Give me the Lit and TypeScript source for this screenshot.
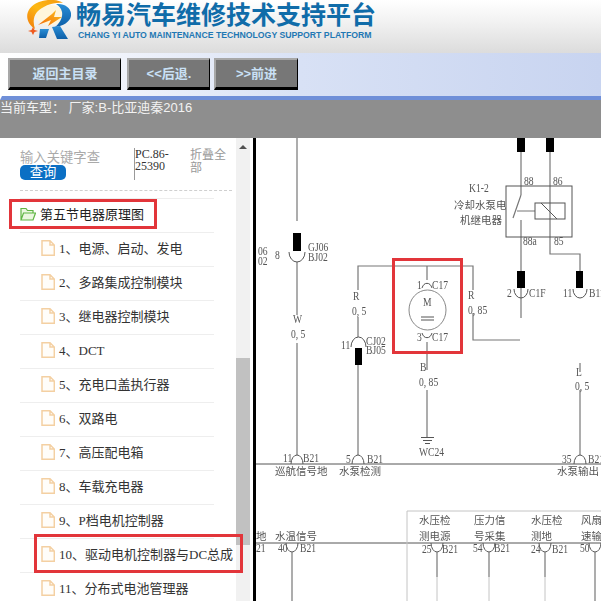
import { LitElement, html, css, svg } from "lit";
import { customElement } from "lit/decorators.js";

const items = [
  "1、电源、启动、发电", "2、多路集成控制模块", "3、继电器控制模块", "4、DCT", "5、充电口盖执行器",
  "6、双路电", "7、高压配电箱", "8、车载充电器", "9、P档电机控制器", "10、驱动电机控制器与DC总成", "11、分布式电池管理器",
];

// Latin / numeric labels: x, baseline y, text
const latin: [number, number, string][] = [
  [258, 255, "06"], [258, 265, "02"], [275, 259, "8"], [308, 251, "GJ06"], [308, 261, "BJ02"],
  [293, 323, "W"], [291, 338, "0, 5"], [353, 300, "R"], [352, 315, "0, 5"], [341, 349, "11"], [366, 345, "CJ02"], [366, 354, "BJ05"],
  [417, 289, "1"], [432, 289, "C17"], [423, 306, "M"], [417, 341, "3"], [432, 341, "C17"], [468, 299, "R"], [468, 314, "0, 85"],
  [420, 371, "B"], [419, 386, "0, 85"], [419, 456, "WC24"], [469, 192, "K1-2"],
  [524, 185, "88"], [553, 185, "86"], [523, 245, "88a"], [554, 245, "85"],
  [507, 297, "2"], [529, 297, "C1F"], [563, 297, "11"], [589, 297, "B11"], [576, 376, "L"], [575, 390, "0, 5"],
  [283, 462, "11"], [303, 462, "B21"], [346, 463, "5"], [367, 463, "B21"], [562, 463, "35"], [588, 463, "B21"],
  [278, 552, "40"], [300, 552, "B21"], [422, 553, "25"], [442, 553, "B21"], [473, 552, "54"], [494, 552, "B21"],
  [531, 553, "24"], [552, 553, "B21"], [580, 552, "50"], [256, 552, "21"],
];

const cjk: [number, number, string][] = [
  [454, 209, "冷却水泵电"], [460, 224, "机继电器"],
  [275, 475, "巡航信号地"], [339, 475, "水泵检测"], [557, 475, "水泵输出"],
  [275, 540, "水温信号"], [419, 524, "水压检"], [419, 540, "测电源"], [474, 524, "压力信"], [474, 540, "号采集"],
  [531, 524, "水压检"], [531, 540, "测地"], [581, 524, "风扇"], [581, 540, "速输"], [256, 540, "地"],
];

const caps: [number, number][] = [[297, 455], [358, 455], [580, 455]];
const cups: number[] = [292, 437, 489, 545, 595];

@customElement("schematic-view")
class SchematicView extends LitElement {
  static styles = css`
    :host { display: block; width: 100%; height: 100%; background: #fff; }
    svg { display: block; width: 345px; height: 463px; filter: blur(0.35px); }
    .w { fill: none; stroke: #777; stroke-width: 1.2; }
    .dk { fill: none; stroke: #555; stroke-width: 1; }
    .faint { fill: none; stroke: #c4c4c4; stroke-width: 1; }
    .blk { fill: #000; }
    text { font-family: "Liberation Serif", serif; font-size: 12px; fill: #555; }
    text.c { font-family: "Noto Sans CJK SC", sans-serif; font-size: 10.5px; }
  `;
  render() {
    return html`<svg viewBox="256 138 345 463" xmlns="http://www.w3.org/2000/svg">
      ${svg`
      <path class="w" d="M297 138V221M297 262V315M297 343V455M358 348V455M358 317V337M358 290V266H473V290M473 313V340H520"/>
      <path class="w" d="M427 266V280M427 342V370M427 390V437"/>
      <path class="w" d="M521 138V195M521 220V318M550 138V254H580V271M580 363V372M580 390V455"/>
      <path class="w" d="M521 195L513 218M517 211H535"/>
      <rect class="dk" x="506" y="186" width="66" height="51"/>
      <rect class="dk" x="535" y="203" width="30" height="16"/>
      <path class="dk" d="M541 203L557 219"/>
      <path class="dk" d="M421 437.500H434M423 440.500H432M425 443.500H430"/>
      <ellipse cx="427.500" cy="310" rx="18.500" ry="20" fill="#fff" stroke="#888"/>
      <path class="dk" d="M421 317H434M421 320H434"/>
      <path class="dk" d="M422 288A5.500 8 0 0 1 432 288M422 333A5.500 8 0 0 0 432 333"/>
      <path class="dk" d="M289 252A8 10 0 0 0 305 252M351 347A7.500 10 0 0 1 366 347M514 289A7 9 0 0 0 528 289M573 289A7 9 0 0 0 587 289"/>
      ${caps.map(([x, y]) => svg`<path class="dk" d="M${x - 6} ${y + 9}A6 9 0 0 1 ${x + 6} ${y + 9}"/>`)}
      ${cups.map((x) => svg`<path class="dk" d="M${x - 6} 543A6 9 0 0 0 ${x + 6} 543"/>`)}
      <rect class="blk" x="293" y="233" width="8" height="18"/>
      <rect class="blk" x="355" y="348" width="7" height="17"/>
      <rect class="blk" x="517" y="138" width="8" height="14"/>
      <rect class="blk" x="546" y="138" width="8" height="14"/>
      <rect class="blk" x="517" y="271" width="8" height="17"/>
      <rect class="blk" x="576" y="271" width="7" height="17"/>
      <path class="dk" d="M256 464H601M256 543H601"/>
      <path class="faint" d="M407 601V511H601"/>
      <path class="w" d="M292 552V601M437 552V577M489 552V577M545 552V577M595 552V601"/>
      <path class="faint" d="M437 577V601M489 577V601M545 577V601"/>
      ${latin.map(([x, y, t]) => svg`<text transform="translate(${x} ${y}) scale(.8 1)">${t}</text>`)}
      ${cjk.map(([x, y, t]) => svg`<text class="c" x=${x} y=${y}>${t}</text>`)}
      `}
    </svg>`;
  }
}

@customElement("app-root")
export class AppRoot extends LitElement {
  static styles = css`
    :host { display: block; width: 601px; height: 601px; position: relative; overflow: hidden; background: #fff;
      font-family: "Liberation Sans", "Noto Sans CJK SC", sans-serif; }
    .page { display: flex; flex-direction: column; height: 601px; }
    .header { height: 53px; flex: none; background: linear-gradient(#ffffff, #f2f2f2 40%, #dcdcdc); display: flex; gap: 5px; padding-left: 25px; box-sizing: border-box; }
    .logo { width: 46px; height: 41px; flex: none; }
    .brand { display: flex; flex-direction: column; align-items: flex-start; margin-top: -1px; }
    .title { font-size: 25px; line-height: 29px; font-weight: 700; color: #106ca9; white-space: nowrap; font-family: "Noto Sans CJK SC", sans-serif; }
    .sub { font-size: 8.7px; line-height: 11px; font-weight: 700; color: #1f78b4; margin: 2px 0 0 2px; white-space: nowrap; }
    .nav { height: 47px; flex: none; box-sizing: border-box; padding: 5px 0 0 6px; display: flex; gap: 5px; background: linear-gradient(90deg, #ffffff, #f0f3fb 20%, #d8e1f5 50%, #c8d4f0); border-bottom: 4px solid #6f8fd8; border-left: 2px solid #fff; align-items: flex-start; }
    .btn { box-sizing: border-box; height: 32px; padding-bottom: 3px; background: #777; color: #c9e0f5; font-size: 13px; font-weight: 700; display: flex; align-items: center; justify-content: center;
      border-top: 2px solid #a8a8a8; border-left: 2px solid #a8a8a8; border-bottom: 3px solid #000; border-right: 1px solid #000; }
    .b1 { width: 113px; margin-right: 1px; } .b2 { width: 83px; } .b3 { width: 84px; margin-left: -1px; }
    .strip { height: 38px; flex: none; background: #8e8e8e; color: #f2f2f2; font-size: 13px; line-height: 15px; white-space: pre; }
    .main { flex: 1; min-height: 0; display: flex; overflow: hidden; }
    .side { width: 236px; flex: none; overflow: hidden; box-sizing: border-box; padding-left: 20px; }
    .search { display: flex; height: 53px; box-sizing: border-box; padding-top: 10px; border-bottom: 1px dashed #cfcfcf; width: 212px; }
    .q { width: 114px; flex: none; padding-top: 2px; }
    .ph { color: #aaa; font-size: 13.33px; line-height: 15px; white-space: nowrap; }
    .go { display: block; width: 46px; height: 15px; border-radius: 5px; background: #0b6fc4; color: #fff; font-size: 13.33px; line-height: 15px; text-align: center; border: 0; padding: 0; font-family: inherit; }
    .pc { width: 56px; flex: none; box-sizing: border-box; height: 32px; border-left: 1px solid #999; font: 12px/12px "Liberation Serif", serif; color: #333; white-space: pre; }
    .fold { width: 38px; font-size: 12px; line-height: 12.500px; color: #999; padding-top: 1px; }
    ul { list-style: none; margin: 7px 0 0; padding: 0; width: 194px; }
    li { height: 34px; box-sizing: border-box; border-top: 1px solid #eee; padding-bottom: 4px; display: flex; align-items: center; white-space: nowrap; font: 13px "Liberation Serif", "Noto Sans CJK SC", serif; color: #333; padding-left: 21px; gap: 4px; }
    li.root { padding-left: 0; color: #222; gap: 4px; }
    li svg { flex: none; }
    .scroll { width: 14px; flex: none; background: #f1f1f1; position: relative; }
    .arrow { position: absolute; left: 3px; top: 7px; width: 0; height: 0; border: 4px solid transparent; border-top: 0; border-bottom: 4px solid #505050; }
    .thumb { position: absolute; left: 0; right: 0; top: 220px; height: 187px; background: #c1c1c1; }
    .view { flex: 1; min-width: 0; margin-left: 3px; border-left: 3px solid #000; }
    .mark { position: absolute; box-sizing: border-box; border: 3px solid #e2353a; pointer-events: none; }
    .m1 { left: 9px; top: 199px; width: 148px; height: 30px; }
    .m2 { left: 34px; top: 534px; width: 209px; height: 39px; }
    .m3 { left: 392px; top: 258px; width: 71px; height: 96px; }
  `;

  private file() {
    return html`<svg width="14" height="16" viewBox="0 0 14 16"><path d="M1 .8H9L13.300 5V15.300H1Z M9 .8V5H13.300" fill="#fffdf9" stroke="#f4d0a2" stroke-width="1.500"/></svg>`;
  }
  private folder() {
    return html`<svg width="16" height="14" viewBox="0 0 16 14"><path d="M1 13V1.500H6L7.500 3.500H13V6M1 13L3.500 6H15.500L13 13Z" fill="#eaf7e0" stroke="#5fb544" stroke-width="1.200"/></svg>`;
  }

  render() {
    return html`<div class="page">
      <div class="header">
        <svg class="logo" viewBox="0 0 46 41">
          <defs>
            <linearGradient id="o" x1="0" y1="1" x2="1" y2="0"><stop offset="0" stop-color="#f07a0c"/><stop offset=".5" stop-color="#fdb813"/><stop offset="1" stop-color="#f59a10"/></linearGradient>
            <linearGradient id="y" x1="0" y1="1" x2="1" y2="0"><stop offset="0" stop-color="#f26a0c"/><stop offset="1" stop-color="#fcc21c"/></linearGradient>
            <linearGradient id="b" x1="0" y1="0" x2="0" y2="1"><stop offset="0" stop-color="#2a8ed6"/><stop offset="1" stop-color="#0d5fa8"/></linearGradient>
          </defs>
          <ellipse cx="25" cy="15" rx="14" ry="10" fill="#fff6dc"/>
          <path d="M10 29C-1 22-1 8 14 2C22-1 32-1 38 3C28 2 18 6 12 12C8 17 8 23 10 29Z" fill="url(#o)"/>
          <path d="M13 25L27 14L31 10L29 17H37L23 26L26 20Z" fill="url(#y)"/>
          <path d="M31 4C41 3 47 9 46 16C45 22 38 26 30 27C35 23 38 17 37 12C36 8 34 6 31 4Z" fill="url(#b)"/>
          <path d="M15 29H24L21 38H14Z" fill="url(#b)"/>
          <path d="M27 27L35 26L43 39H32Z" fill="url(#b)"/>
          <path d="M8 27L9.500 30L13 31L9.500 32L8 35L6.500 32L3 31L6.500 30Z" fill="#ef5a1e"/>
        </svg>
        <div class="brand">
          <div class="title">畅易汽车维修技术支持平台</div>
          <div class="sub">CHANG YI AUTO MAINTENANCE TECHNOLOGY SUPPORT PLATFORM</div>
        </div>
      </div>
      <div class="nav">
        <div class="btn b1">返回主目录</div>
        <div class="btn b2">&lt;&lt;后退.</div>
        <div class="btn b3">&gt;&gt;前进</div>
      </div>
      <div class="strip">当前车型： 厂家:B-比亚迪秦2016</div>
      <div class="main">
        <div class="side">
          <div class="search">
            <div class="q"><div class="ph">输入关键字查</div><button class="go">查询</button></div>
            <div class="pc">PC.86-
25390</div>
            <div class="fold">折叠全部</div>
          </div>
          <ul>
            <li class="root">${this.folder()}第五节电器原理图</li>
            ${items.map((t) => html`<li>${this.file()}${t}</li>`)}
          </ul>
        </div>
        <div class="scroll"><div class="arrow"></div><div class="thumb"></div></div>
        <div class="view"><schematic-view></schematic-view></div>
      </div>
      <div class="mark m1"></div>
      <div class="mark m2"></div>
      <div class="mark m3"></div>
    </div>`;
  }
}
